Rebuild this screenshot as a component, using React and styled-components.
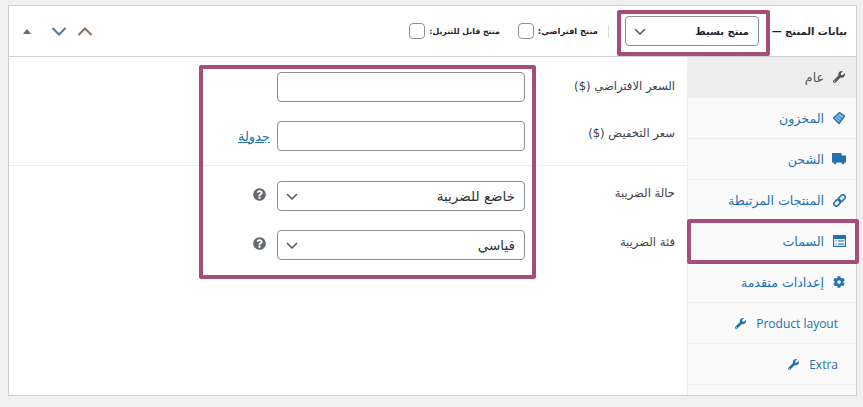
import React from 'react';
import styled, { createGlobalStyle } from 'styled-components';
import { FaWrench, FaCog, FaQuestionCircle } from 'react-icons/fa';

const FONT = '"DejaVu Sans", "Noto Sans", sans-serif';

const GlobalStyle = createGlobalStyle`
  html, body {
    margin: 0;
    background: #f0f0f1;
  }
  body {
    font-family: "Open Sans", ${FONT};
    font-size: 13px;
    color: #3c434a;
  }
`;

const TagIcon = () => (
  <svg width="14" height="14" viewBox="0 0 14 14">
    <path d="M7.5 1.5 L12.5 5 L7 12.5 L1.5 7 Z" fill="#8db8da" stroke="#2271b1" strokeWidth="1.4" strokeLinejoin="round" />
    <path d="M5.5 4.5 L10 8 M4 6.5 L8.5 10" stroke="#2271b1" strokeWidth="0.8" />
  </svg>
);

const TruckIcon = () => (
  <svg width="14" height="12" viewBox="0 0 14 12">
    <path d="M0 0 H9.5 V2.5 H14 V9.5 H0 Z" fill="#2271b1" />
    <circle cx="3" cy="10" r="1.3" fill="#2271b1" />
    <circle cx="11" cy="10" r="1.3" fill="#2271b1" />
  </svg>
);

const LinkIcon = () => (
  <svg width="13" height="13" viewBox="0 0 13 13">
    <g fill="none" stroke="#2271b1" strokeWidth="1.6" transform="rotate(-45 6.5 6.5)">
      <rect x="-0.5" y="4.2" width="7.5" height="4.6" rx="2.3" />
      <rect x="6" y="4.2" width="7.5" height="4.6" rx="2.3" />
    </g>
  </svg>
);

const TableIcon = () => (
  <svg width="13" height="13" viewBox="0 0 13 13">
    <rect width="13" height="12" fill="#2271b1" />
    <rect x="1.2" y="4" width="10.6" height="6.8" fill="#fff" />
    <rect x="5" y="5" width="6" height="2" fill="#7fb0d6" />
    <rect x="5" y="8" width="6" height="2" fill="#7fb0d6" />
    <rect x="2" y="5" width="2" height="2" fill="#b5cfe4" />
    <rect x="2" y="8" width="2" height="2" fill="#b5cfe4" />
  </svg>
);

const Chevron = ({ color = '#50575e', up }) => (
  <svg width="16" height="9" viewBox="0 0 16 9">
    <path d={up ? 'M1.5 8 L8 1.5 L14.5 8' : 'M1.5 1 L8 7.5 L14.5 1'} fill="none" stroke={color} strokeWidth="2" />
  </svg>
);

const SelectChevron = () => (
  <svg width="12" height="7" viewBox="0 0 12 7">
    <path d="M1 1 L6 6 L11 1" fill="none" stroke="#50575e" strokeWidth="1.5" />
  </svg>
);

const TABS = [
  { label: 'عام', icon: <FaWrench size={12} />, active: true },
  { label: 'المخزون', icon: <TagIcon /> },
  { label: 'الشحن', icon: <TruckIcon /> },
  { label: 'المنتجات المرتبطة', icon: <LinkIcon /> },
  { label: 'السمات', icon: <TableIcon /> },
  { label: 'إعدادات متقدمة', icon: <FaCog size={12} /> },
  { label: 'Product layout', icon: <FaWrench size={11} />, trailing: true },
  { label: 'Extra', icon: <FaWrench size={11} />, trailing: true },
];

const App = () => (
  <>
    <GlobalStyle />
    <Panel dir="rtl">
      <Header>
        <Title>بيانات المنتج —</Title>
        <ProductType>
          <SelectText $bold>منتج بسيط</SelectText>
          <SelectChevron />
        </ProductType>
        <Separator />
        <CheckLabel>منتج افتراضي:</CheckLabel>
        <Checkbox />
        <CheckLabel $second>منتج قابل للتنزيل:</CheckLabel>
        <Checkbox />
        <Arrows>
          <Chevron up color="#8a6d5a" />
          <Chevron color="#4f7a9c" />
          <SortArrow />
        </Arrows>
      </Header>
      <Body>
        <Tabs>
          {TABS.map(tab => (
            <Tab key={tab.label} $active={tab.active} $trailing={tab.trailing}>
              <TabIcon $active={tab.active}>{tab.icon}</TabIcon>
              <span>{tab.label}</span>
            </Tab>
          ))}
        </Tabs>
        <Content>
          <FieldGroup>
            <Field>
              <FieldLabel $low>السعر الافتراضي ($)</FieldLabel>
              <Input />
            </Field>
            <Field>
              <FieldLabel>سعر التخفيض ($)</FieldLabel>
              <Input />
              <Schedule href="#">جدولة</Schedule>
            </Field>
          </FieldGroup>
          <FieldGroup $divided>
            <Field>
              <FieldLabel>حالة الضريبة</FieldLabel>
              <Select>
                <SelectText>خاضع للضريبة</SelectText>
                <SelectChevron />
              </Select>
              <Help><FaQuestionCircle size={13} /></Help>
            </Field>
            <Field>
              <FieldLabel>فئة الضريبة</FieldLabel>
              <Select>
                <SelectText>قياسي</SelectText>
                <SelectChevron />
              </Select>
              <Help><FaQuestionCircle size={13} /></Help>
            </Field>
          </FieldGroup>
        </Content>
      </Body>
      <TypeHighlight />
      <TabHighlight />
      <FieldsHighlight />
    </Panel>
  </>
);

export default App;

const Panel = styled.div`
  position: relative;
  box-sizing: border-box;
  width: 849px;
  margin: 5px 0 0 8px;
  border: 1px solid #ccd0d4;
  background: #fff;
`;

const Header = styled.div`
  display: flex;
  align-items: center;
  box-sizing: border-box;
  height: 51px;
  padding-right: 9px;
  border-bottom: 1px solid #ccd0d4;
`;

const Title = styled.span`
  width: 78px;
  margin-left: 10px;
  font-family: ${FONT};
  font-size: 10px;
  font-weight: 700;
  color: #1d2327;
  white-space: nowrap;
`;

const Select = styled.div`
  display: flex;
  align-items: center;
  justify-content: space-between;
  box-sizing: border-box;
  width: 248px;
  height: 30px;
  padding: 0 9px 0 8px;
  border: 1px solid #8c8f94;
  border-radius: 4px;
  background: #fff;
`;

const ProductType = styled(Select)`
  width: 134px;
`;

const SelectText = styled.span`
  font-family: ${FONT};
  font-size: ${p => (p.$bold ? '10px' : '13.5px')};
  font-weight: ${p => (p.$bold ? 700 : 400)};
  color: ${p => (p.$bold ? '#1d2327' : '#2c3338')};
`;

const Separator = styled.div`
  width: 1px;
  height: 13px;
  margin: 0 16px 0 10px;
  background: #dcdcde;
`;

const CheckLabel = styled.span`
  margin-right: ${p => (p.$second ? '18px' : '0')};
  font-family: ${FONT};
  font-size: ${p => (p.$second ? '7.8px' : '8.3px')};
  font-weight: 700;
  color: #1d2327;
  white-space: nowrap;
`;

const Checkbox = styled.div`
  box-sizing: border-box;
  width: 16px;
  height: 16px;
  margin-right: 4px;
  border: 1px solid #8c8f94;
  border-radius: 4px;
  background: #fff;
`;

const Arrows = styled.div`
  display: flex;
  align-items: center;
  gap: 10px;
  margin-right: auto;
  padding-left: 14px;
`;

const SortArrow = styled.div`
  width: 0;
  height: 0;
  margin-right: 10px;
  border-right: 4px solid transparent;
  border-left: 4px solid transparent;
  border-bottom: 5px solid #646970;
`;

const Body = styled.div`
  display: flex;
  min-height: 338px;
`;

const Tabs = styled.div`
  flex: none;
  box-sizing: border-box;
  width: 169px;
  border-left: 1px solid #eee;
  background: #fafafa;
`;

const Tab = styled.div`
  display: flex;
  flex-direction: ${p => (p.$trailing ? 'row-reverse' : 'row')};
  justify-content: ${p => (p.$trailing ? 'flex-end' : 'flex-start')};
  align-items: center;
  gap: ${p => (p.$trailing ? '9px' : '8px')};
  box-sizing: border-box;
  height: 41px;
  padding-right: ${p => (p.$trailing ? '18px' : '10px')};
  border-bottom: 1px solid #eee;
  background: ${p => (p.$active ? '#eee' : 'transparent')};
  color: ${p => (p.$active ? '#555' : '#2271b1')};
  font-family: ${p => (p.$trailing ? `"Open Sans", ${FONT}` : FONT)};
  font-size: ${p => (p.$trailing ? '12px' : '12.6px')};
`;

const TabIcon = styled.span`
  display: inline-flex;
  justify-content: center;
  width: 14px;
  color: ${p => (p.$active ? '#555' : '#2271b1')};
`;

const Content = styled.div`
  flex: 1;
`;

const FieldGroup = styled.div`
  display: flex;
  flex-direction: column;
  gap: 19px;
  padding: 15px 12px 14px 0;
  border-top: ${p => (p.$divided ? '1px solid #eee' : 'none')};
`;

const Field = styled.div`
  display: flex;
  align-items: center;
`;

const FieldLabel = styled.label`
  align-self: flex-start;
  width: 150px;
  padding-top: ${p => (p.$low ? '2px' : '0')};
  font-family: ${FONT};
  font-size: 11.6px;
  line-height: 24px;
  color: #3c434a;
`;

const Input = styled.div`
  box-sizing: border-box;
  width: 248px;
  height: 30px;
  border: 1px solid #8c8f94;
  border-radius: 4px;
  background: #fff;
`;

const Schedule = styled.a`
  margin-right: 7px;
  font-family: ${FONT};
  font-size: 13px;
  color: #2271b1;
`;

const Help = styled.span`
  display: inline-flex;
  margin: -3px 11px 0 0;
  color: #646970;
`;

const Highlight = styled.div`
  position: absolute;
  box-sizing: border-box;
  border: 4px solid #a64d79;
  border-radius: 2px;
  pointer-events: none;
`;

const TypeHighlight = styled(Highlight)`
  top: 4px;
  left: 608px;
  width: 153px;
  height: 46px;
`;

const TabHighlight = styled(Highlight)`
  top: 213px;
  left: 678px;
  width: 172px;
  height: 45px;
`;

const FieldsHighlight = styled(Highlight)`
  top: 59px;
  left: 190px;
  width: 337px;
  height: 214px;
`;
